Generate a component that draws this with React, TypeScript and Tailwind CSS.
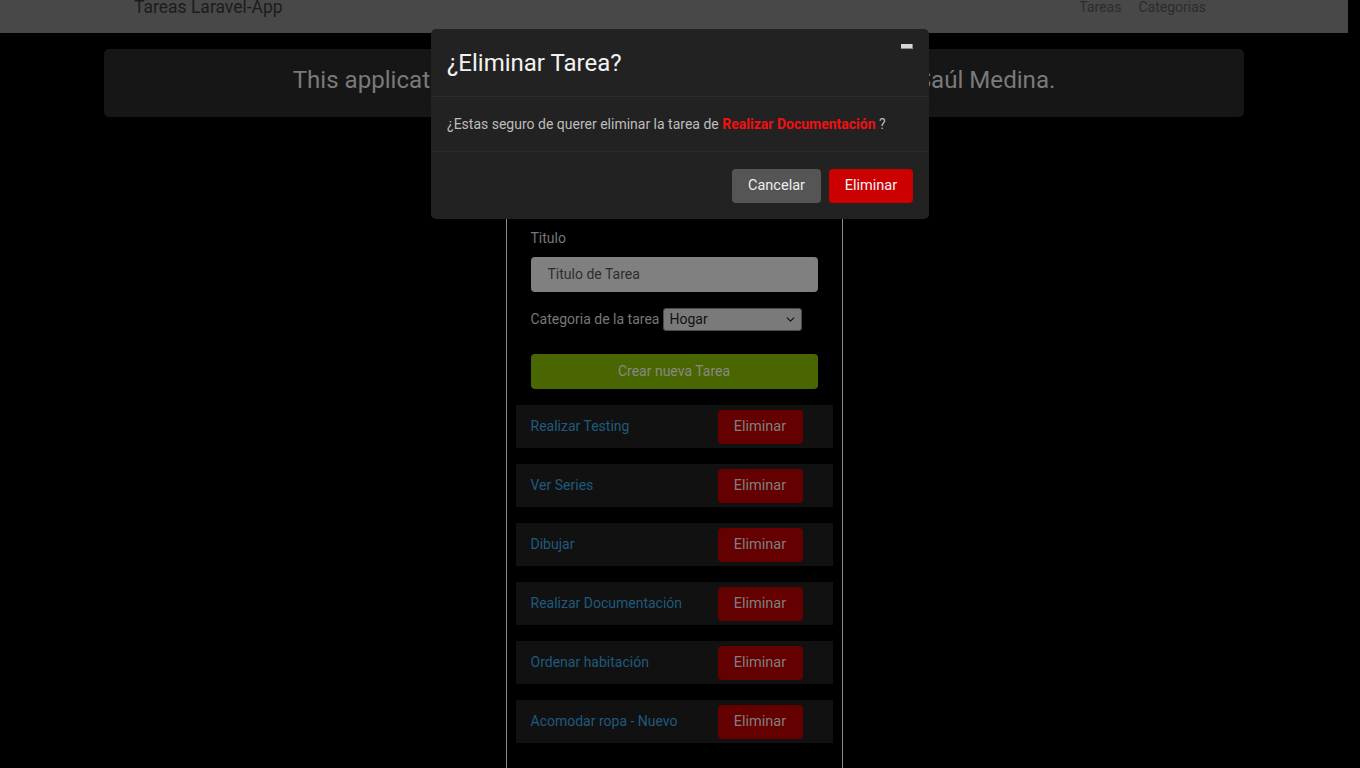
import { ChevronDown } from 'lucide-react'

const tareas = [
  'Realizar Testing',
  'Ver Series',
  'Dibujar',
  'Realizar Documentación',
  'Ordenar habitación',
  'Acomodar ropa - Nuevo',
]

export default function App() {
  return (
    <div className="relative h-[768px] w-full overflow-hidden bg-black font-['Roboto','Liberation_Sans',sans-serif]">
      {/* navbar */}
      <nav className="flex h-[33px] w-[1348px] items-start bg-[#484848]">
        <div className="mx-auto -mt-[6px] flex w-[1140px] items-center justify-between pl-[30px] pr-[38px]">
          <span className="text-[17.5px] text-[#1c1c1c]">Tareas Laravel-App</span>
          <div className="flex gap-[17px] text-[14px] text-[#2c2c2c]">
            <span>Tareas</span>
            <span>Categorias</span>
          </div>
        </div>
      </nav>

      <div className="w-[1348px]">
        {/* alert */}
        <div className="mx-auto mt-4 flex h-[68px] w-[1140px] items-center justify-center rounded-[5px] bg-[#161616] pb-[6px]">
          <p className="text-[24.1px] text-[#7a7a7a]">
            This application was developed with Laravel and Vue.js by Saúl Medina.
          </p>
        </div>

        {/* card */}
        <div className="mx-auto mt-4 h-[700px] w-[337px] border border-[#8a8a8a] px-[9px]">
          <div className="px-[15px] pt-[84px]">
            <div className="border-b border-[#1c1c1c]" />
            <label className="mt-[9px] block text-[14px] leading-5 text-[#777]">Titulo</label>
            <div className="mt-[9px] flex h-[35px] items-center rounded-[4px] bg-[#808080] px-[17px] text-[14px] text-[#2d2d2d]">
              Titulo de Tarea
            </div>
            <div className="mt-4 flex h-[22px] items-center gap-1 text-[14px]">
              <span className="text-[#777]">Categoria de la tarea</span>
              <div className="relative">
                <select className="h-[23px] w-[139px] appearance-none rounded-[3px] border border-[#4a4a4a] bg-[#7a7a7a] pl-[5px] text-[14px] text-[#111] outline-none">
                  <option>Hogar</option>
                </select>
                <ChevronDown className="pointer-events-none absolute right-[5px] top-[5px] h-[13px] w-[13px] text-[#111]" strokeWidth={2} />
              </div>
            </div>
            <div className="mt-6 flex h-[35px] items-center justify-center rounded-[4px] bg-[#4a6600] text-[14px] text-[#888]">
              Crear nueva Tarea
            </div>
          </div>

          <div className="mt-4 flex flex-col gap-4">
            {tareas.map((t) => (
              <div key={t} className="flex h-[43px] items-center justify-between bg-[#111] pl-[15px] pr-[30px]">
                <span className="text-[14px] text-[#1f5a7e]">{t}</span>
                <div className="flex h-[34px] w-[85px] items-center justify-center rounded-[4px] bg-[#650000] text-[14.5px] text-[#7f7f7f]">
                  Eliminar
                </div>
              </div>
            ))}
          </div>
        </div>
      </div>

      {/* modal */}
      <div className="absolute left-[431px] top-[29px] w-[498px] rounded-[5px] bg-[#222]">
        <div className="relative flex h-[68px] items-center border-b border-[#2c2c2c] px-4 pt-[1px]">
          <h2 className="text-[24px] text-[#f2f2f2]">¿Eliminar Tarea?</h2>
          <div className="absolute right-[16px] top-[15px] h-[5px] w-[12px] border-b border-r border-[#8a8a8a] bg-[#d6d6d6]" />
        </div>
        <div className="flex h-[55px] items-center border-b border-[#2a2a2a] px-4 pt-[1px] text-[14px] text-[#bdbdbd]">
          <p>
            ¿Estas seguro de querer eliminar la tarea de{' '}
            <span className="font-bold text-[#f01111]">Realizar Documentación</span> ?
          </p>
        </div>
        <div className="flex h-[67px] items-center justify-end gap-2 px-4">
          <button className="h-[34px] w-[89px] rounded-[4px] bg-[#555] text-[14.5px] text-[#eee]">Cancelar</button>
          <button className="h-[34px] w-[84px] rounded-[4px] bg-[#cc0000] text-[14.5px] text-[#f4f4f4]">Eliminar</button>
        </div>
      </div>
    </div>
  )
}
